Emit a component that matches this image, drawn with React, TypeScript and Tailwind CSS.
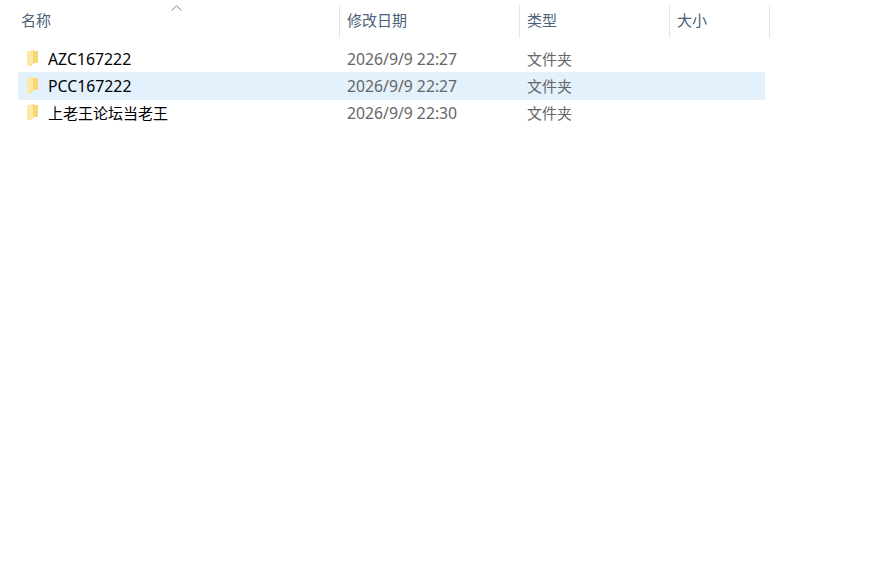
const fontStack = '[font-family:"Noto_Sans","Noto_Sans_CJK_SC",sans-serif]';

const files = [
    { name: 'AZC167222', date: '2026/9/9 22:27', rowClass: 'h-[27px] pt-[2px]', typeClass: '', latin: true },
    { name: 'PCC167222', date: '2026/9/9 22:27', rowClass: 'h-[28px] pt-[1.5px] bg-[#e3f1fc]', typeClass: '-translate-y-[1px]', latin: true },
    { name: '上老王论坛当老王', date: '2026/9/9 22:30', rowClass: 'h-[27px]', typeClass: '', latin: false },
];

function FolderIcon() {
    return (
        <svg width="13" height="18" viewBox="0 0 13 18" className="shrink-0">
            <path d="M6.5 2H12V14H6.5z" fill="#f9d772" />
            <path d="M1 2.2 7.5 1V13.5L5 17H1z" fill="#fde8a6" />
            <path d="M7.5 1V13.5L5 17" fill="none" stroke="#f3cf74" strokeWidth="0.7" />
        </svg>
    );
}

function HeaderCell({ label, className }: { label: string; className: string }) {
    return (
        <div className={`h-[33px] flex items-center border-r border-[#e5e5e5] text-[15px] text-[#4c607a] ${className}`}>
            <span className="-translate-y-[1px]">{label}</span>
        </div>
    );
}

export default function App() {
    return (
        <div className={`relative w-[871px] h-[568px] bg-white overflow-hidden ${fontStack}`}>
            <div className="flex pt-[5px]">
                <HeaderCell label="名称" className="w-[340px] pl-[21px]" />
                <HeaderCell label="修改日期" className="w-[180px] pl-[7px]" />
                <HeaderCell label="类型" className="w-[150px] pl-[7px]" />
                <HeaderCell label="大小" className="w-[100px] pl-[7px]" />
            </div>
            <svg width="11" height="6" viewBox="0 0 11 6" className="absolute left-[171px] top-[5px]">
                <path d="M0.5 5.5 5.5 0.8 10.5 5.5" fill="none" stroke="#8a8a8a" strokeWidth="1" />
            </svg>
            <div className="mt-[7px] ml-[18px] w-[747px]">
                {files.map((f) => (
                    <div key={f.name} className={`flex items-center ${f.rowClass}`}>
                        <div className="w-[30px] pl-[8px] flex items-center -translate-y-[2px]">
                            <FolderIcon />
                        </div>
                        <div className={`w-[299px] text-black ${f.latin ? 'text-[15.8px]' : 'text-[15px]'}`}>{f.name}</div>
                        <div className="w-[180px] text-[15.75px] text-[#666666]">{f.date}</div>
                        <div className={`text-[15px] text-[#666666] ${f.typeClass}`}>文件夹</div>
                    </div>
                ))}
            </div>
        </div>
    );
}
